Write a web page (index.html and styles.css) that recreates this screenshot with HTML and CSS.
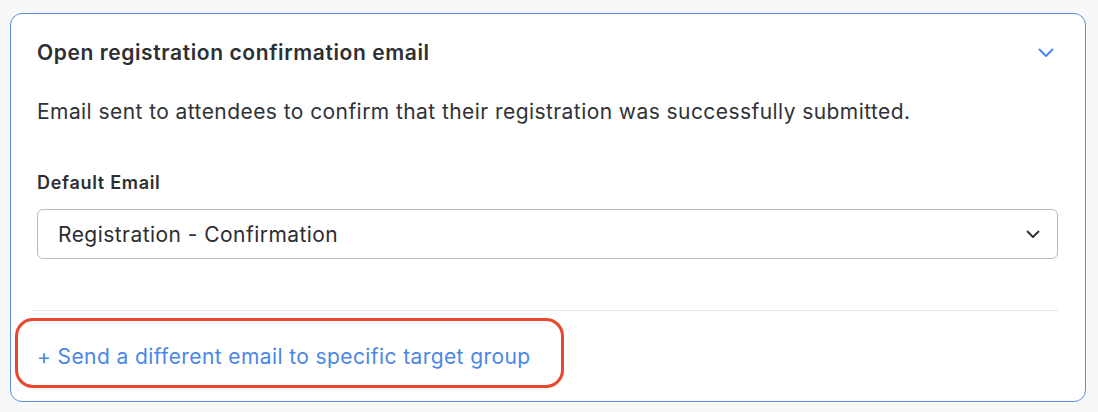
FILE: index.html
```html
<!DOCTYPE html>
<html lang="en">
<head>
    <meta charset="UTF-8">
    <meta name="viewport" content="width=device-width, initial-scale=1.0">
    <title>Email Settings</title>
    <link rel="stylesheet" href="styles.css">
</head>
<body>
    <div class="email-card">
        <div class="card-header">
            <h2 class="card-title">Open registration confirmation email</h2>
            <svg class="collapse-icon" width="16" height="10" viewBox="0 0 16 10">
                <path d="M1.5 1.5 L8 8 L14.5 1.5" fill="none" stroke="#4a86ec" stroke-width="2" stroke-linecap="round" stroke-linejoin="round"/>
            </svg>
        </div>
        <p class="card-desc">Email sent to attendees to confirm that their registration was successfully submitted.</p>

        <label class="field-label" for="default-email">Default Email</label>
        <div class="select-box">
            <span class="select-value">Registration - Confirmation</span>
            <svg class="select-arrow" width="14" height="9" viewBox="0 0 14 9">
                <path d="M1.5 1.5 L7 7 L12.5 1.5" fill="none" stroke="#2b2d31" stroke-width="1.8" stroke-linecap="round" stroke-linejoin="round"/>
            </svg>
        </div>

        <hr class="divider">

        <div class="target-link">
            <a href="#">+ Send a different email to specific target group</a>
        </div>
    </div>
</body>
</html>
```

FILE: styles.css
```css
body {
    margin: 0;
    background-color: #f8f8f8;
    font-family: 'Inter', 'Liberation Sans', sans-serif;
    color: #2e3034;
}
.email-card {
    margin: 13px 0 0 10px;
    width: 1021px;
    height: 387px;
    background: #fff;
    border: 1px solid #5a8ee8;
    border-radius: 12px;
    padding: 0 27px 0 26px;
}
.card-header {
    display: flex;
    align-items: center;
    justify-content: space-between;
    padding-top: 27px;
}
.card-title {
    margin: 0;
    font-size: 21px;
    line-height: 24px;
    font-weight: 600;
    letter-spacing: 0.6px;
    color: #2d2f33;
}
.collapse-icon {
    margin-right: 4px;
}
.card-desc {
    margin: 33px 0 0;
    font-size: 21px;
    line-height: 28px;
    letter-spacing: 0.43px;
    color: #2f3236;
}
.field-label {
    display: block;
    margin-top: 46px;
    font-size: 18px;
    line-height: 22px;
    font-weight: 600;
    letter-spacing: 0.7px;
    color: #2d2f33;
}
.select-box {
    margin-top: 15px;
    height: 48px;
    border: 1px solid #b7bbc1;
    border-radius: 6px;
    display: flex;
    align-items: center;
    justify-content: space-between;
    padding: 0 17px 0 20px;
}
.select-value {
    font-size: 21px;
    letter-spacing: 0.45px;
    color: #2b2d31;
}
.divider {
    margin: 51px 0 0 -5px;
    border: none;
    border-top: 1px solid #e4e4e4;
}
.target-link {
    display: inline-block;
    margin: 7px 0 0 -22px;
    padding: 24px 30px 16px 19px;
    border: 3px solid #e8472b;
    border-radius: 18px;
}
.target-link a {
    font-size: 21px;
    line-height: 24px;
    letter-spacing: 0.4px;
    color: #4a86e8;
    text-decoration: none;
}
```
